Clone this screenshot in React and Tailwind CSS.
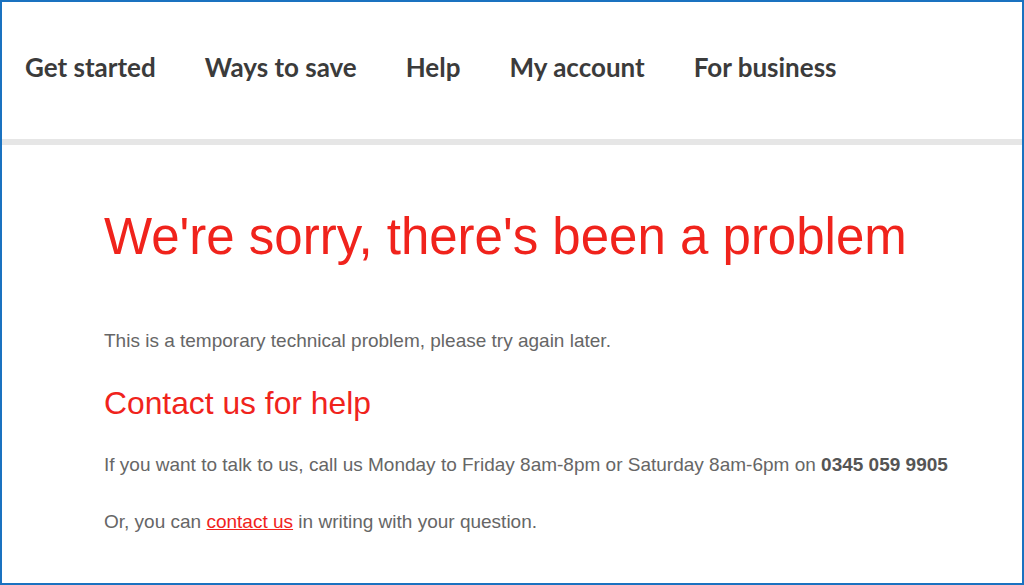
import React from "react";

const NAV_ITEMS = ["Get started", "Ways to save", "Help", "My account", "For business"];

const App = () => {
  return (
    <div className="w-[1024px] h-[585px] border-2 border-[#1a72c0] bg-white overflow-hidden">
      {/* Top navigation */}
      <nav className="h-[137px] pb-[6px] flex items-center gap-[49px] pl-[23px] font-['Lato','Open_Sans',sans-serif] font-bold text-[26px] text-[#3b3b3b]">
        {NAV_ITEMS.map((item) => (
          <span key={item}>{item}</span>
        ))}
      </nav>
      <div className="h-[6px] bg-[#e6e6e6]" />

      {/* Error content */}
      <main className="pl-[102px] pt-[62px] font-['Liberation_Sans',Arial,sans-serif]">
        <h1 className="text-[#f0231c] text-[51px] leading-[60px]">
          We're sorry, there's been a problem
        </h1>
        <p className="mt-[62px] text-[19px] leading-[24px] text-[#666666]">
          This is a temporary technical problem, please try again later.
        </p>
        <h2 className="mt-[30px] text-[#f0231c] text-[31.8px] leading-[40px]">
          Contact us for help
        </h2>
        <p className="mt-[30px] text-[19px] leading-[24px] text-[#666666]">
          If you want to talk to us, call us Monday to Friday 8am-8pm or Saturday 8am-6pm on{" "}
          <strong className="font-bold text-[#555555]">0345 059 9905</strong>
        </p>
        <p className="mt-[33px] text-[19px] leading-[24px] text-[#666666]">
          Or, you can{" "}
          <a href="#" className="text-[#f0231c] underline">
            contact us
          </a>{" "}
          in writing with your question.
        </p>
      </main>
    </div>
  );
};

export default App;
